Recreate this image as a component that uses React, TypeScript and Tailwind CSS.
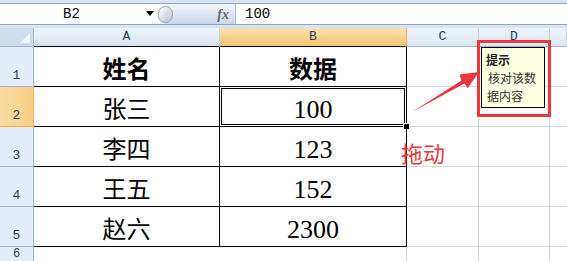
import React from 'react';

const cols = [
  { key: 'A', w: 'w-[186px]', active: false },
  { key: 'B', w: 'w-[187px]', active: true },
  { key: 'C', w: 'w-[72px]', active: false },
  { key: 'D', w: 'w-[71px]', active: false },
  { key: '', w: 'flex-1', active: false },
];

const rows = [
  { n: 1, a: '姓名', b: '数据', bold: true },
  { n: 2, a: '张三', b: '100' },
  { n: 3, a: '李四', b: '123' },
  { n: 4, a: '王五', b: '152' },
  { n: 5, a: '赵六', b: '2300' },
];

const mono = "font-['Liberation_Mono','Noto_Sans_CJK_SC',monospace]";
const cellFont = "font-['Liberation_Serif','Noto_Sans_CJK_SC',serif]";

function FormulaBar() {
  return (
    <div className="h-[28px] bg-[#dbe5f1] pt-[3px]">
      <div className="flex h-[22px] items-stretch border-y border-[#8ea6c6] bg-white">
        {/* name box */}
        <div className={`relative flex w-[157px] items-center justify-center pr-[14px] text-[14px] text-black ${mono}`}>
          B2
          <span className="absolute left-[146px] top-[7px] h-0 w-0 border-x-[4px] border-t-[5px] border-x-transparent border-t-black" />
        </div>
        {/* fx area */}
        <div className="relative flex w-[79px] items-center justify-end rounded-l-full border-r border-[#a9bcd6] bg-gradient-to-b from-[#f3f6fb] to-[#c9d7ea] pr-[6px]">
          <span className="absolute left-[1px] top-[2px] h-[17px] w-[15px] rounded-full border border-[#9aa8ba] bg-gradient-to-br from-[#ffffff] to-[#b9c2cf]" />
          <span className="font-['Liberation_Serif',serif] text-[14px] italic font-bold text-[#6b6b6b]">fx</span>
        </div>
        <div className={`flex items-center pl-[9px] text-[14px] text-black ${mono}`}>100</div>
      </div>
    </div>
  );
}

function HeaderRow() {
  return (
    <div className="flex h-[19px]">
      <div className="relative w-[34px] border-b border-r border-[#9eb6ce] bg-[#cfdcec]">
        <span className="absolute bottom-[3px] right-[3px] h-0 w-0 border-b-[10px] border-l-[10px] border-l-transparent border-b-[#f1f5fa]" />
      </div>
      {cols.map((c, i) => (
        <div
          key={i}
          className={`${c.w} flex items-center justify-center border-r text-[13px] ${mono} ${
            c.active
              ? 'border-[#f2b04b] bg-gradient-to-b from-[#fbe2b2] to-[#f5c46c] text-[#27415f]'
              : 'border-[#c5d1e0] bg-gradient-to-b from-[#eff4fa] to-[#dbe5f1] text-[#27415f]'
          } ${c.key === 'A' || c.key === 'B' ? 'border-b border-b-black' : 'border-b border-b-[#9eb6ce]'}`}
        >
          {c.key}
        </div>
      ))}
    </div>
  );
}

function DataRow({ r }: { r: (typeof rows)[number] }) {
  const active = r.n === 2;
  return (
    <div className="flex h-[40px]">
      <div
        className={`flex w-[34px] items-end justify-center border-b border-r pb-[1px] text-[13px] ${mono} text-[#27415f] ${
          active
            ? 'border-[#f2b04b] bg-gradient-to-r from-[#fbdc9f] to-[#f8cd85]'
            : 'border-[#9eb6ce] bg-[#e4ecf7]'
        }`}
      >
        {r.n}
      </div>
      <div
        className={`flex w-[186px] items-center justify-center border-b border-r border-black pt-[6px] text-[24px] text-black ${cellFont} ${
          r.bold ? 'font-bold' : ''
        }`}
      >
        {r.a}
      </div>
      <div
        className={`relative flex w-[187px] items-center justify-center border-b border-r border-black pt-[6px] text-black ${cellFont} ${
          r.bold ? 'text-[24px] font-bold' : 'text-[26px]'
        }`}
      >
        {r.b}
        {active && (
          <>
            <span className="absolute inset-[1px] border border-black" />
            <span className="absolute -bottom-[4px] -right-[4px] h-[7px] w-[7px] border border-white bg-black" />
          </>
        )}
      </div>
      <div className="w-[72px] border-b border-r border-[#d0d7e5]" />
      <div className="w-[71px] border-b border-r border-[#d0d7e5]" />
      <div className="flex-1 border-b border-[#d0d7e5]" />
    </div>
  );
}

export default function App() {
  return (
    <div className="relative h-[261px] w-[567px] overflow-hidden bg-white">
      <FormulaBar />
      <HeaderRow />
      {rows.map((r) => (
        <DataRow key={r.n} r={r} />
      ))}
      {/* row 6 */}
      <div className="flex h-[20px]">
        <div className={`flex w-[34px] items-start justify-center border-r border-[#9eb6ce] bg-[#e4ecf7] pt-[1px] text-[12px] leading-[13px] ${mono} text-[#27415f]`}>
          6
        </div>
        <div className="w-[186px]" />
        <div className="w-[187px] border-r border-[#d0d7e5]" />
        <div className="w-[72px] border-r border-[#d0d7e5]" />
        <div className="w-[71px] border-r border-[#d0d7e5]" />
      </div>

      {/* annotation: comment box with red frame */}
      <div className="absolute left-[477px] top-[40px] h-[77px] w-[74px] border-[3px] border-[#e8383d]">
        <div className="ml-[1px] mt-[4px] h-[61px] w-[64px] border border-black bg-[#ffffe1] pl-[4px] pt-[3px] font-['Noto_Sans_CJK_SC',sans-serif] text-[12px] leading-[18px] text-[#333]">
          <div className="font-bold text-[#222]">提示</div>
          <div className="pl-[2px]">核对该数</div>
          <div className="pl-[1px]">据内容</div>
        </div>
      </div>

      {/* arrow */}
      <svg className="absolute left-0 top-0" width="567" height="261" viewBox="0 0 567 261">
        <polygon
          points="412,112 461.5,80.5 459.4,74.4 479,72 467.7,88.2 464.5,83.6"
          fill="#e8383d"
        />
      </svg>

      {/* drag label */}
      <div className="absolute left-[401px] top-[137px] font-['Noto_Sans_CJK_SC',sans-serif] text-[22px] leading-[30px] text-[#e8383d]">
        拖动
      </div>
    </div>
  );
}
